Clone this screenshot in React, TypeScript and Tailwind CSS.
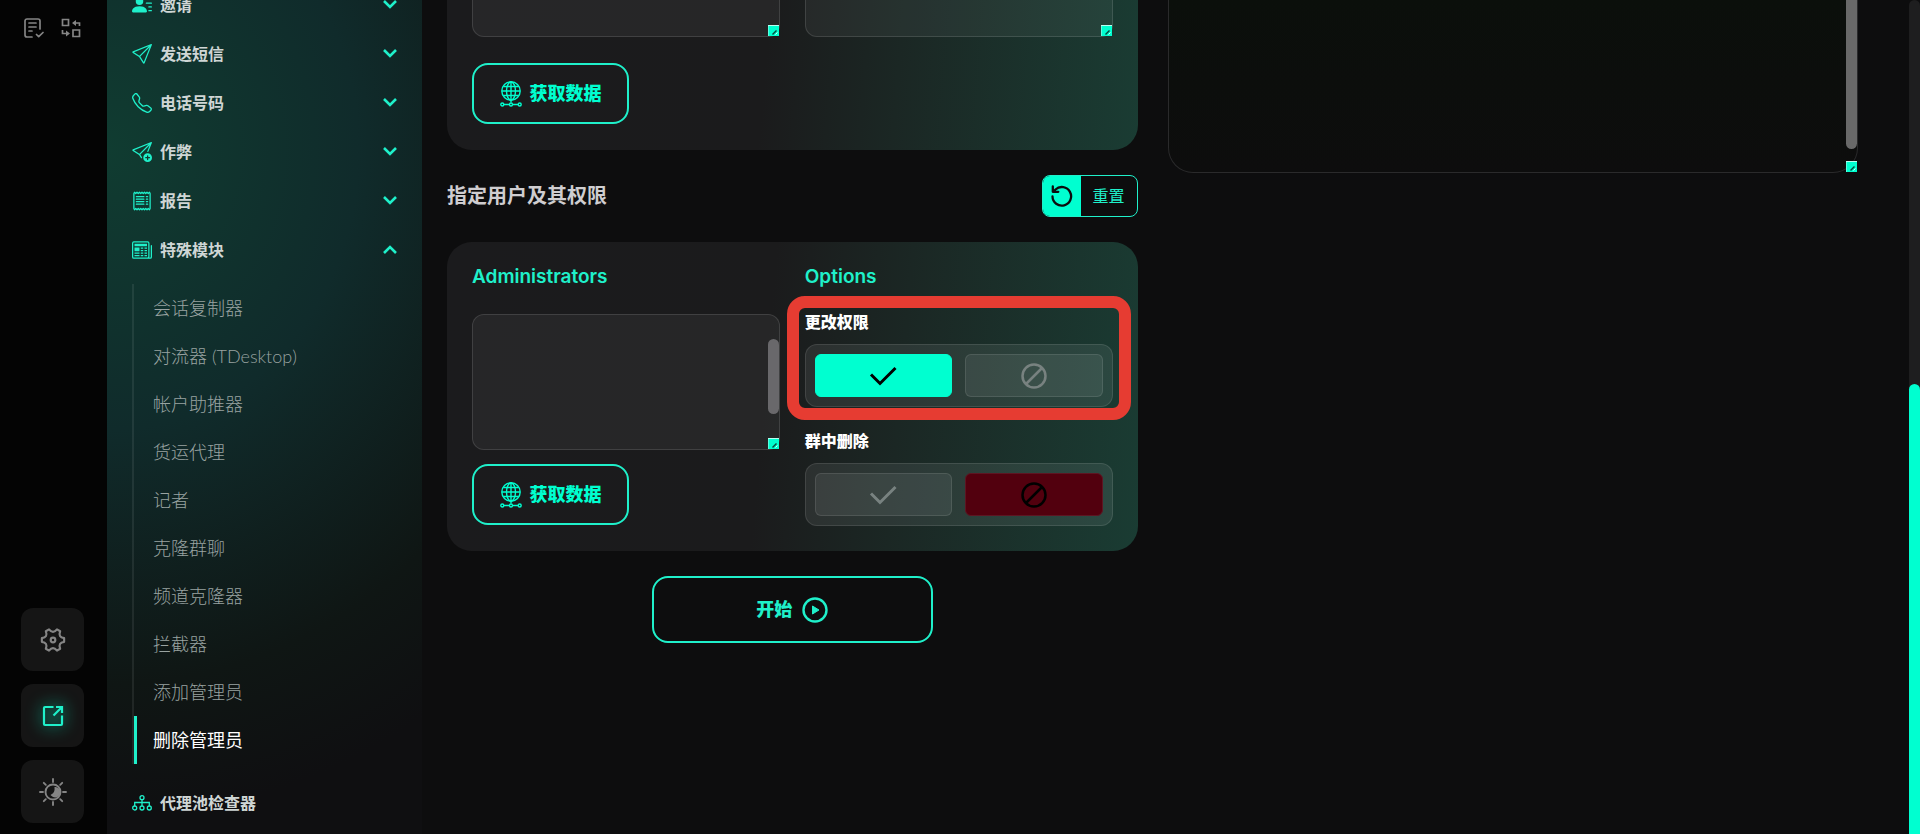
import type { ReactNode } from 'react';
import {
  BsNewspaper,
  BsPersonLinesFill,
  BsReceipt,
  BsSend,
  BsSendPlus,
  BsTelephone,
} from 'react-icons/bs';

const menu = [
  { label: '邀请', icon: BsPersonLinesFill },
  { label: '发送短信', icon: BsSend },
  { label: '电话号码', icon: BsTelephone },
  { label: '作弊', icon: BsSendPlus },
  { label: '报告', icon: BsReceipt },
  { label: '特殊模块', icon: BsNewspaper, open: true },
];

const modules = [
  '会话复制器',
  '对流器 (TDesktop)',
  '帐户助推器',
  '货运代理',
  '记者',
  '克隆群聊',
  '频道克隆器',
  '拦截器',
  '添加管理员',
  '删除管理员',
];

function DocCheckIcon() {
  return (
    <svg width="20" height="20" viewBox="0 0 20 20" fill="none" stroke="currentColor" strokeWidth="1.7" strokeLinecap="round" strokeLinejoin="round">
      <path d="M16 11V3a2 2 0 0 0-2-2H3a2 2 0 0 0-2 2v14a2 2 0 0 0 2 2h5M5 5h7M5 9h7M5 13h3M12.500 16.500l2.200 2.200 4.300-4.200" />
    </svg>
  );
}

function SwapIcon() {
  return (
    <svg width="20" height="20" viewBox="0 0 20 20" fill="none" stroke="currentColor" strokeWidth="1.700">
      <path d="M1.500 1.500h6v6h-6zM12 12h6.500v6.500H12z" />
      <path d="M18.500 8V5H14M1.500 12v3.500H6" />
      <path d="M15 2v6l-4-3zM5 12.500v6l4-3z" fill="currentColor" strokeWidth="0" />
    </svg>
  );
}

function GearIcon() {
  return (
    <svg width="26" height="26" viewBox="-1 -1 28 28" fill="none" stroke="currentColor" strokeWidth="2.300" strokeLinejoin="round">
      <path d="M8.700 1.600Q13 7 17.300 1.600L20.700 3.600Q18.200 10 25 11V15Q18.200 16 20.700 22.400L17.300 24.400Q13 19 8.700 24.400L5.300 22.400Q7.800 16 1 15V11Q7.800 10 5.300 3.600Z" />
      <circle cx="13" cy="13" r="2.500" />
    </svg>
  );
}

function OpenIcon() {
  return (
    <svg width="22" height="22" viewBox="0 0 22 22" fill="none" stroke="currentColor" strokeWidth="2.200" className="drop-shadow-[0_0_8px_#00ffd0]">
      <path d="M11.500 2H3a1 1 0 0 0-1 1v16a1 1 0 0 0 1 1h16a1 1 0 0 0 1-1v-8.500M14 2h6v6M20 2l-8.500 8.500" />
    </svg>
  );
}

function ThemeIcon() {
  return (
    <svg width="28" height="28" viewBox="0 0 28 28" fill="none" stroke="currentColor" strokeWidth="1.900" strokeLinecap="round">
      <circle cx="14" cy="14" r="7.500" />
      <path d="M14 1v3M14 24v3M1 14h3M24 14h3M4.800 4.800l2 2M21.200 21.200l2 2M4.800 23.200l2-2M21.200 6.800l2-2" />
      <path d="M16.500 10a4.300 4.300 0 1 1-3.500 7.200Q17 15 16.500 10z" fill="currentColor" />
    </svg>
  );
}

function NodesIcon() {
  return (
    <svg width="20" height="16" viewBox="0 0 20 16" fill="none" stroke="currentColor" strokeWidth="1.300">
      <circle cx="10" cy="2.700" r="2" />
      <circle cx="2.700" cy="13" r="2" />
      <circle cx="10" cy="13" r="2" />
      <circle cx="17.300" cy="13" r="2" />
      <path d="M10 5v6M2.700 11V7.500h14.600V11" />
    </svg>
  );
}

function GlobeIcon() {
  return (
    <svg width="22" height="26" viewBox="0 0 22 26" fill="none" stroke="currentColor" strokeWidth="1.400">
      <circle cx="11" cy="10" r="9.200" />
      <ellipse cx="11" cy="10" rx="4.500" ry="9" />
      <path d="M11 1v20.500M2 10h18M3.500 5.500h15M3.500 14.500h15M4 23.500h5M13 23.500h5" />
      <circle cx="2.300" cy="23.500" r="1.500" />
      <circle cx="11" cy="23.500" r="1.500" />
      <circle cx="19.700" cy="23.500" r="1.500" />
    </svg>
  );
}

function Chevron({ up }: { up?: boolean }) {
  return (
    <svg width="14" height="9" viewBox="0 0 14 9" fill="none" stroke="currentColor" strokeWidth="2.600">
      <path d={up ? 'M1 8l6-6 6 6' : 'M1 1l6 6 6-6'} />
    </svg>
  );
}

function ResetIcon() {
  return (
    <svg width="22" height="22" viewBox="0 0 22 22" fill="none" stroke="currentColor" strokeWidth="2.300" strokeLinecap="round" strokeLinejoin="round">
      <path d="M1.500 11.500a9.300 9.300 0 1 0 3-7L2.300 6.500M1.800 1.500v5.300h5.500" />
    </svg>
  );
}

function CheckIcon() {
  return (
    <svg width="28" height="20" viewBox="0 0 28 20" fill="none" stroke="currentColor" strokeWidth="3">
      <path d="M2 8.500l9 9L26.500 2" />
    </svg>
  );
}

function BanIcon() {
  return (
    <svg width="26" height="26" viewBox="0 0 26 26" fill="none" stroke="currentColor" strokeWidth="2.500">
      <circle cx="13" cy="13" r="11.500" />
      <path d="M5 21L21 5" />
    </svg>
  );
}

function PlayIcon() {
  return (
    <svg width="26" height="26" viewBox="0 0 26 26" fill="none" stroke="currentColor" strokeWidth="2.400">
      <circle cx="13" cy="13" r="11.500" />
      <path d="M10.500 9v8l6.500-4z" fill="currentColor" strokeWidth="1" strokeLinejoin="round" />
    </svg>
  );
}

// resize corner of a scrollable box
function Grip() {
  return (
    <svg width="11" height="11" viewBox="0 0 11 11" className="absolute right-px bottom-px">
      <path d="M0 0h11v11H0z" fill="#00ffd0" />
      <path d="M0 11V.5h11" fill="none" stroke="#b8fff1" />
      <path d="M4.500 9.500l4-4" stroke="#06483c" strokeWidth="1.500" />
      <path d="M7.500 9.500l2-2" stroke="#d8fff8" />
    </svg>
  );
}

function FetchButton() {
  return (
    <button className="flex h-[61px] w-[157px] items-center justify-center gap-2 rounded-2xl border-2 border-[#1ff0ca] text-lg font-black text-[#00ffd0]">
      <GlobeIcon />
      获取数据
    </button>
  );
}

function Toggle({ label, on }: { label: string; on: boolean }) {
  const base = 'flex h-[43px] flex-1 items-center justify-center rounded-md border';
  const idle = 'border-white/10 bg-white/7 text-[#788280]';
  return (
    <div role="group" aria-label={label} className="flex gap-[13px] rounded-xl border border-white/10 bg-white/8 p-[9px]">
      <button aria-label="on" className={`${base} ${on ? 'border-[#00ffd0] bg-[#00ffd0] text-black' : idle}`}>
        <CheckIcon />
      </button>
      <button aria-label="off" className={`${base} ${on ? idle : 'border-[#5e1522] bg-[#52000e] text-black'}`}>
        <BanIcon />
      </button>
    </div>
  );
}

function RailTile({ label, children }: { label: string; children: ReactNode }) {
  return (
    <button aria-label={label} className="flex h-[63px] w-[63px] items-center justify-center rounded-xl bg-[#151515] text-[#858585]">
      {children}
    </button>
  );
}

export default function App() {
  const card = 'rounded-[25px] bg-[linear-gradient(95deg,#1b1b1d_0%,#1b1b1c_46%,#1b2724_65%,#1a3c33_100%)]';
  const field = 'block w-full resize-none overflow-hidden border border-white/12 bg-white/5 outline-none';

  return (
    <div className="flex h-screen overflow-hidden bg-[#0d0d0e] font-['Inter','Noto_Sans_CJK_SC',sans-serif]">
      {/* Icon rail */}
      <div className="flex w-[107px] shrink-0 flex-col justify-between bg-[#040404] pt-[18px] pr-0.5 pb-[11px]">
        <div className="flex justify-center gap-[17px] text-[#858585]">
          <button aria-label="Tasks"><DocCheckIcon /></button>
          <button aria-label="Switch"><SwapIcon /></button>
        </div>
        <div className="flex flex-col items-center gap-[13px]">
          <RailTile label="Settings"><GearIcon /></RailTile>
          <RailTile label="Open"><span className="text-[#1ff0ca]"><OpenIcon /></span></RailTile>
          <RailTile label="Theme"><ThemeIcon /></RailTile>
        </div>
      </div>

      {/* Sidebar */}
      <nav className="w-[315px] shrink-0 overflow-hidden bg-[radial-gradient(190%_80%_at_0%_18%,#103c31_0%,#102b2b_42%,#0f1614_80%,#0f0f11_100%)] px-[25px]">
        <div className="-mt-5">
          {menu.map(({ label, icon: Icon, open }) => (
            <button key={label} className="flex h-[49px] w-full items-center gap-2 text-base font-bold text-[#cfd6d5]">
              <Icon size={20} className="text-[#1ff0ca]" />
              {label}
              <span className="ml-auto text-[#1ff0ca]"><Chevron up={open} /></span>
            </button>
          ))}
        </div>
        <ul className="mt-2.5 mb-3.5 border-l-2 border-white/8">
          {modules.map((name) => (
            <li key={name}>
              <a
                href="#"
                className={`flex h-12 items-center border-l-3 pl-4 font-['Lato','Noto_Sans_CJK_SC',sans-serif] text-lg ${
                  name === '删除管理员' ? 'border-[#1ff0ca] text-white' : 'border-transparent font-light text-[#99a3a1]'
                }`}
              >
                {name}
              </a>
            </li>
          ))}
        </ul>
        <button className="flex h-[49px] w-full items-center gap-2 text-base font-bold text-[#cfd6d5]">
          <span className="text-[#1ff0ca]"><NodesIcon /></span>
          代理池检查器
        </button>
      </nav>

      {/* Content */}
      <main className="grid flex-1 grid-cols-2 items-start gap-[30px] pr-[51px] pl-[25px]">
        <div className="flex flex-col gap-[25px]">
          <section className={`${card} rounded-t-none px-[25px] pb-[26px]`}>
            <div className="grid grid-cols-2 gap-[25px] pb-[26px]">
              <div className="relative">
                <textarea aria-label="Accounts" className={`${field} h-[37px] rounded-b-xl border-t-0`} />
                <Grip />
              </div>
              <div className="relative">
                <textarea aria-label="Groups" className={`${field} h-[37px] rounded-b-xl border-t-0`} />
                <Grip />
              </div>
            </div>
            <FetchButton />
          </section>

          <div className="flex items-center justify-between">
            <h2 className="text-xl font-bold text-[#cfcdd0]">指定用户及其权限</h2>
            <button className="flex h-[42px] w-24 overflow-hidden rounded-lg border border-[#1ff0ca] text-base text-[#1ff0ca]">
              <span className="flex h-full w-[38px] items-center justify-center bg-[#00ffd0] text-[#0c0c0e]">
                <ResetIcon />
              </span>
              <span className="flex h-full flex-1 items-center justify-center">重置</span>
            </button>
          </div>

          <section className={`${card} grid grid-cols-2 gap-[25px] p-[25px]`}>
            <div>
              <label htmlFor="admins" className="mb-[27px] block text-[19px]/5 font-semibold text-[#1ff0ca]">Administrators</label>
              <div className="relative mb-3.5">
                <textarea id="admins" className={`${field} h-[136px] rounded-xl`} />
                <span className="absolute top-[25px] right-px h-[75px] w-[11px] rounded-full bg-[#69686b]" />
                <Grip />
              </div>
              <FetchButton />
            </div>
            <div>
              <h3 className="mb-[25px] text-[19px]/5 font-semibold text-[#1ff0ca]">Options</h3>
              <div className="relative mb-6">
                <p className="mb-3 text-base/5 font-black text-white">更改权限</p>
                <Toggle label="更改权限" on />
                <div className="pointer-events-none absolute -inset-x-[18px] -top-4 -bottom-[13px] rounded-[18px] border-12 border-[#e63c32]" />
              </div>
              <p className="mb-3 text-base/5 font-black text-white">群中删除</p>
              <Toggle label="群中删除" on={false} />
            </div>
          </section>

          <button className="flex h-[67px] w-[281px] items-center justify-center gap-2.5 self-center rounded-2xl border-2 border-[#1ff0ca] text-lg font-black text-[#1ff0ca]">
            开始
            <PlayIcon />
          </button>
        </div>

        {/* Log */}
        <div className="relative">
          <textarea aria-label="Log" readOnly className="block h-[173px] w-full resize-none rounded-b-[25px] border border-t-0 border-[#2a2a2b] bg-linear-to-b from-[#0b0f0b] to-[#0d0d0d] outline-none" />
          <span className="absolute top-0 right-px h-[149px] w-[11px] rounded-b-full bg-[#696969]" />
          <Grip />
        </div>
      </main>

      {/* Page scrollbar */}
      <div className="flex w-[11px] shrink-0 flex-col justify-end rounded-t-full bg-[#1e1e1f]">
        <div className="h-[54%] rounded-t-full bg-[#00ffd0]" />
      </div>
    </div>
  );
}
